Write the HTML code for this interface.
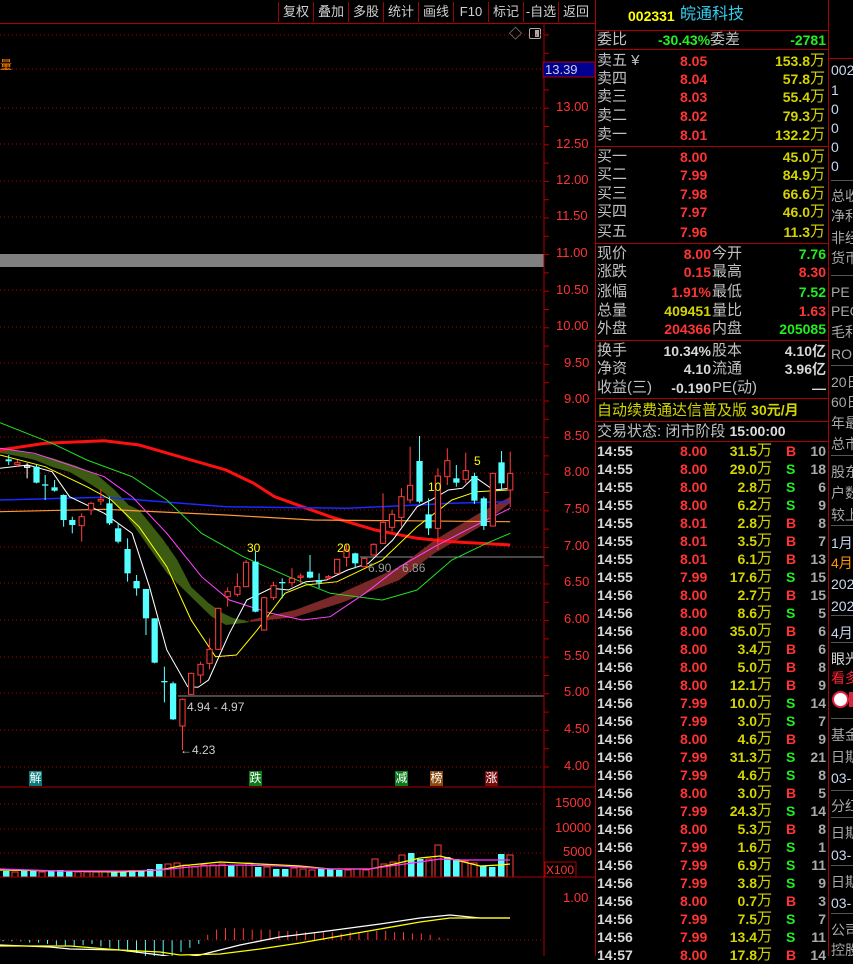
<!DOCTYPE html>
<html><head><meta charset="utf-8">
<style>
*{margin:0;padding:0;box-sizing:border-box}
body{width:853px;height:956px;background:#000;overflow:hidden;position:relative;font-family:"Liberation Sans","Noto Sans CJK SC",sans-serif;font-size:14px;color:#c0c0c0}
.a{position:absolute;white-space:nowrap;line-height:18px}
.r{text-align:right}
.red{color:#ff3434}.yel{color:#d4d400}.grn{color:#22ee22}.wht{color:#d8d8d8}
.hl{position:absolute;height:1px;background:#b00000}
.vl{position:absolute;width:1px;background:#b00000}
.b{font-weight:bold}
.tb{position:absolute;top:2px;height:20px;line-height:20px;color:#d0d0d0;font-size:13px;text-align:center;border-left:1px solid #a00000}
.ax{position:absolute;left:556px;color:#ff3434;font-size:13px;line-height:14px}
.rc{position:absolute;left:831px;color:#a8a8a8;font-size:14px;line-height:18px;white-space:nowrap}
.mk{position:absolute;top:771px;width:13px;height:15px;font-size:12px;line-height:15px;text-align:center;color:#fff}
</style></head><body>
<div class="hl" style="left:0;top:23px;width:595px"></div>
<div class="tb" style="left:278px;width:35px">复权</div>
<div class="tb" style="left:313px;width:35px">叠加</div>
<div class="tb" style="left:348px;width:35px">多股</div>
<div class="tb" style="left:383px;width:35px">统计</div>
<div class="tb" style="left:418px;width:35px">画线</div>
<div class="tb" style="left:453px;width:35px">F10</div>
<div class="tb" style="left:488px;width:35px">标记</div>
<div class="tb" style="left:523px;width:35px">-自选</div>
<div class="tb" style="left:558px;width:35px">返回</div>
<div class="a" style="left:509px;top:25px;color:#bbb;font-size:13px">◇</div>
<div style="position:absolute;left:529px;top:28px;width:12px;height:11px;border:1px solid #aaa;border-radius:2px"><div style="position:absolute;right:1px;top:1px;width:4px;height:7px;background:#aaa"></div></div>
<div class="a" style="left:0;top:56px;color:#ff8800;font-size:12px">量</div>

<svg width="853" height="956" style="position:absolute;left:0;top:0">
<g id="grid"></g>
<rect x="0" y="254" width="544" height="13" fill="#808080"/>
<line x1="360" y1="557" x2="544" y2="557" stroke="#909090"/>
<line x1="178" y1="696" x2="544" y2="696" stroke="#909090"/>
<g transform="scale(0.3476,1)">
<polygon fill="#3b5a12" points="0,448 50,451 100,454 150,458 220,466 280,475 330,490 370,505 400,510 440,527 470,540 510,560 550,587 600,603 640,613 670,618 700,620 720,622 700,623 650,625 610,617 580,607 530,590 480,573 440,553 400,533 350,510 300,493 250,482 200,472 150,467 100,460 50,456 0,453"/>
</g>
<g transform="scale(1.0427,1)">
<polygon fill="#7a2828" points="240,620 283,610 327,593 383,567 417,540 460,513 489,497 489,503 460,527 417,553 383,580 327,603 283,617 240,622"/>
<g id="lines"></g>
<g id="candles"></g>
</g>
<g id="vol"></g>
<g id="macd"></g>
<line x1="544" y1="24" x2="544" y2="956" stroke="#b00000"/>
<line x1="0" y1="787" x2="595" y2="787" stroke="#b00000"/>
<line x1="0" y1="877" x2="595" y2="877" stroke="#b00000"/>
<rect x="543" y="62" width="52" height="15" fill="#000090" stroke="#b00000"/>
<rect x="545" y="862" width="31" height="15" fill="none" stroke="#b00000"/>
</svg>
<div class="a" style="left:545px;top:61px;color:#ccd;font-size:13px">13.39</div>
<div class="ax" style="top:100px">13.00</div><div class="ax" style="top:137px">12.50</div>
<div class="ax" style="top:173px">12.00</div><div class="ax" style="top:209px">11.50</div>
<div class="ax" style="top:246px">11.00</div><div class="ax" style="top:283px">10.50</div>
<div class="ax" style="top:319px">10.00</div><div class="ax" style="top:356px;left:564px">9.50</div>
<div class="ax" style="top:392px;left:564px">9.00</div><div class="ax" style="top:429px;left:564px">8.50</div>
<div class="ax" style="top:465px;left:564px">8.00</div><div class="ax" style="top:502px;left:564px">7.50</div>
<div class="ax" style="top:539px;left:564px">7.00</div><div class="ax" style="top:575px;left:564px">6.50</div>
<div class="ax" style="top:612px;left:564px">6.00</div><div class="ax" style="top:649px;left:564px">5.50</div>
<div class="ax" style="top:685px;left:564px">5.00</div><div class="ax" style="top:722px;left:564px">4.50</div>
<div class="ax" style="top:759px;left:564px">4.00</div>
<div class="ax" style="top:796px;left:555px">15000</div>
<div class="ax" style="top:821px;left:555px">10000</div>
<div class="ax" style="top:845px;left:563px">5000</div>
<div class="ax" style="top:863px;left:546px;font-size:12px">X100</div>
<div class="ax" style="top:891px;left:563px">1.00</div>

<div class="a" style="left:187px;top:698px;color:#ccc;font-size:12px">4.94 - 4.97</div>
<div class="a" style="left:180px;top:741px;color:#ccc;font-size:12px">←4.23</div>
<div class="a" style="left:368px;top:559px;color:#999;font-size:12px">6.90 - 6.86</div>
<div class="a" style="left:247px;top:539px;color:#ffff00;font-size:12px">30</div>
<div class="a" style="left:337px;top:539px;color:#ffff00;font-size:12px">20</div>
<div class="a" style="left:428px;top:478px;color:#ffff00;font-size:12px">10</div>
<div class="a" style="left:474px;top:452px;color:#ffff00;font-size:12px">5</div>
<div class="mk" style="left:29px;background:#0a7a7a">解</div>
<div class="mk" style="left:249px;background:#0a7a1a">跌</div>
<div class="mk" style="left:395px;background:#0a7a1a">减</div>
<div class="mk" style="left:430px;background:#8a4a0a">榜</div>
<div class="mk" style="left:485px;background:#7a0a0a">涨</div>

<div class="vl" style="left:595px;top:0;height:956px"></div>
<div class="vl" style="left:828px;top:0;height:956px"></div>
<div class="hl" style="left:595px;top:30px;width:234px"></div>
<div class="a b" style="left:628px;top:7px;color:#ffff00;font-size:14px">002331</div>
<div class="a" style="left:680px;top:6px;color:#33ccee;font-size:16px">皖通科技</div>
<div class="a" style="left:597px;top:31px;font-size:15px">委比</div>
<div class="a b grn" style="left:658px;top:31px">-30.43%</div>
<div class="a" style="left:710px;top:31px;font-size:15px">委差</div>
<div class="a b grn r" style="left:760px;top:31px;width:66px">-2781</div>
<div class="hl" style="left:595px;top:49px;width:234px"></div>
<div class="hl" style="left:595px;top:146px;width:234px"></div>
<div class="hl" style="left:595px;top:243px;width:234px"></div>
<div class="hl" style="left:595px;top:340px;width:234px"></div>
<div class="hl" style="left:595px;top:398px;width:234px"></div>
<div class="hl" style="left:595px;top:421px;width:234px"></div>
<div class="hl" style="left:595px;top:441px;width:234px"></div>
<div id="q"></div>
<div class="a yel" style="left:597px;top:401px;font-size:15px">自动续费通达信普及版 <b style="font-size:14px">30元/月</b></div>
<div class="a" style="left:597px;top:422px;font-size:15px">交易状态: 闭市阶段 <b style="font-size:14px;color:#ddd">15:00:00</b></div>
<div id="t"></div>
<div class="hl" style="left:829px;top:58px;width:24px"></div>
<div id="rc"></div>

<script>
var NS="http://www.w3.org/2000/svg";
function el(g,tag,at){var e=document.createElementNS(NS,tag);for(var k in at)e.setAttribute(k,at[k]);document.getElementById(g).appendChild(e);return e;}
[35,69,108,144,181,217,290,327,363,400,437,473,510,547,583,620,657,693,730,767].forEach(function(y){el("grid","line",{x1:0,y1:y,x2:542,y2:y,stroke:"#b00000","stroke-dasharray":"1,3"});});
[804,829,853].forEach(function(y){el("grid","line",{x1:0,y1:y,x2:542,y2:y,stroke:"#b00000","stroke-dasharray":"1,3"});});
for(var y=35;y<780;y+=18.3){el("grid","line",{x1:544,y1:y,x2:549,y2:y,stroke:"#b00000"});}
function pl(pts,c,w){var s=pts.map(function(p){return (p[0]/3).toFixed(1)+","+(400+p[1]/3).toFixed(1)}).join(" ");el("lines","polyline",{points:s,fill:"none",stroke:c,"stroke-width":w});}
pl([[0,150],[130,130],[300,122],[400,135],[550,180],[650,210],[730,250],[790,290],[870,320],[950,350],[1080,390],[1200,415],[1300,425],[1468,435]],"#ff1010",3);
pl([[0,300],[300,292],[650,320],[1000,325],[1300,310],[1468,305]],"#1a2aff",1.5);
pl([[0,335],[300,328],[650,345],[900,360],[1468,365]],"#ff9933",1.2);
pl([[0,68],[150,130],[250,180],[380,230],[480,300],[580,400],[700,470],[830,530],[950,580],[1100,600],[1200,570],[1300,480],[1400,430],[1468,400]],"#22dd22",1);
pl([[0,145],[100,160],[300,230],[380,290],[480,400],[580,530],[660,600],[780,640],[870,660],[950,650],[1050,580],[1150,500],[1250,440],[1380,370],[1468,325]],"#ff44ff",1);
pl([[0,165],[130,200],[250,260],[320,300],[400,380],[480,500],[550,660],[620,770],[680,765],[740,690],[820,580],[880,555],[970,545],[1100,480],[1200,380],[1300,300],[1370,275],[1468,270]],"#ffff00",1);
pl([[0,205],[80,195],[150,215],[200,290],[300,340],[380,400],[430,560],[480,750],[540,860],[570,862],[600,840],[660,700],[710,600],[780,565],[830,570],[880,545],[940,540],[1000,510],[1060,490],[1130,420],[1200,320],[1240,300],[1290,270],[1330,265],[1365,230],[1420,270],[1468,265]],"#ffffff",1);
var C=[[25,178,184,165,195,0],[50,188,194,180,200,1],[78,198,202,190,235,2],[105,200,248,195,250,0],[130,253,257,225,300,0],[157,262,272,240,275,0],[183,285,360,283,380,0],[208,360,375,350,400,0],[235,350,377,340,425,1],[262,310,330,305,345,1],[290,298,303,268,315,1],[315,310,370,290,375,0],[340,385,425,370,430,0],[367,447,520,415,545,0],[393,543,565,525,587,0],[420,567,655,567,705,0],[445,655,788,655,790,0],[473,843,847,800,907,0],[498,850,958,845,960,0],[525,898,978,895,1050,1],[550,820,883,818,885,1],[577,793,825,785,850,1],[603,748,790,715,808,1],[628,625,748,623,750,1],[655,575,590,562,620,1],[683,560,583,520,590,1],[708,487,560,480,562,1],[735,485,635,455,637,0],[760,593,690,590,692,1],[787,557,593,545,600,1],[812,546,550,535,595,0],[840,535,548,505,560,1],[865,528,532,520,548,1],[892,515,533,465,535,0],[918,540,548,520,565,0],[945,530,534,525,540,1],[970,478,520,476,522,1],[997,450,472,435,500,1],[1022,460,490,458,505,0],[1048,475,500,473,502,1],[1075,433,465,430,467,1],[1102,367,430,280,432,1],[1128,343,382,330,395,1],[1155,290,352,265,380,1],[1180,256,300,140,310,1],[1207,183,305,108,310,0],[1233,343,385,295,405,0],[1260,228,385,205,450,1],[1287,182,230,145,255,1],[1313,235,248,195,260,0],[1340,212,238,158,250,1],[1365,228,302,218,312,0],[1392,295,378,290,390,0],[1418,220,378,218,380,1],[1443,187,250,153,270,0],[1468,220,270,155,322,1]];
C.forEach(function(c){var x=c[0]/3,bt=400+c[1]/3,bb=400+c[2]/3,wt=400+c[3]/3,wb=400+c[4]/3;
 var col=c[5]==0?"#54ffff":(c[5]==2?"#ffffff":"#ff3a3a");
 el("candles","line",{x1:x,y1:wt,x2:x,y2:wb,stroke:col,"stroke-width":1});
 var h=Math.max(bb-bt,1);
 if(c[5]==0) el("candles","rect",{x:x-3,y:bt,width:6,height:h,fill:col});
 else el("candles","rect",{x:x-2.5,y:bt,width:5,height:h,fill:"#000",stroke:col,"stroke-width":1});
});
var V=[6,5,6,6,5,6,7,6,5,5,5,6,5,6,7,7,8,13,13,14,12,10,12,12,13,12,12,14,10,10,8,8,9,8,7,9,8,7,7,8,7,18,13,15,22,24,18,18,32,20,18,16,14,11,10,23,22];
V.forEach(function(h,i){var x=3+i*9.0;var up=[1,4,8,9,10,11,18,19,20,21,22,23,24,26,27,29,32,33,34,38,39,40,41,42,43,44,47,48,51,52,56].indexOf(i)>=0;
 if(up) el("vol","rect",{x:x,y:877-h,width:6,height:h,fill:"#000",stroke:"#ff3a3a"});
 else el("vol","rect",{x:x,y:877-h,width:6.5,height:h,fill:"#54ffff"});});
function pv(pts,c){el("vol","polyline",{points:pts,fill:"none",stroke:c,"stroke-width":1.2});}
pv("0,870 60,871 120,872 160,870 180,866 220,862 260,864 300,866 330,869 370,869 390,865 420,858 440,856 460,861 480,866 500,865 510,864","#ffff00");
pv("0,869 60,871 120,871 160,870 200,866 240,865 280,866 330,869 370,869 390,866 420,862 440,859 460,860 480,860 500,860 510,860","#ff33ff");
for(var i=0;i<58;i++){var x=3+i*8.9;var v=[1,1,1,2,2,3,4,5,5,4,3,5,6,8,9,10,14,16,17,13,9,6,3,-4,-8,-9,-9,-9,-8,-8,-8,-7,-7,-7,-6,-6,-6,-6,-5,-6,-6,-6,-7,-7,-6,-6,-5,-5,-4,-2,-1,0,0,0,0,0,0,0][i];
 if(v>0) el("macd","line",{x1:x,y1:940,x2:x,y2:940+v*1.3,stroke:"#54ffff"});
 else if(v<0) el("macd","line",{x1:x,y1:940,x2:x,y2:940+v*1.3,stroke:"#ff3a3a"});}
el("macd","line",{x1:0,y1:940,x2:542,y2:940,stroke:"#b00000","stroke-dasharray":"1,3"});
el("macd","polyline",{points:"0,945 50,947 70,949 120,950 160,955 180,958 200,955 240,945 280,937 320,932 350,928 380,924 420,918 450,915 480,918 510,918",fill:"none",stroke:"#ffffff","stroke-width":1.3});
el("macd","polyline",{points:"0,946 50,946 70,946 120,950 160,952 180,955 220,954 260,949 300,943 340,936 380,929 420,922 450,918 480,918 510,918",fill:"none",stroke:"#ffff00","stroke-width":1.3});

var q=document.getElementById("q"),h="";
function row(y,l,v,vc,r,rv,rc){h+='<div class="a" style="left:597px;top:'+y+'px;font-size:15px">'+l+'</div>';
 if(v)h+='<div class="a b r '+vc+'" style="left:640px;top:'+y+'px;width:71px">'+v+'</div>';
 if(r)h+='<div class="a" style="left:712px;top:'+y+'px;font-size:15px">'+r+'</div>';
 if(rv)h+='<div class="a b r '+rc+'" style="left:755px;top:'+y+'px;width:71px">'+rv+'</div>';}
function ob(y,l,p,v){h+='<div class="a" style="left:597px;top:'+y+'px;font-size:15px">'+l+'</div><div class="a b red" style="left:680px;top:'+y+'px">'+p+'</div><div class="a b yel r" style="left:740px;top:'+y+'px;width:70px">'+v+'</div><div class="a yel" style="left:810px;top:'+y+'px;font-size:15px">万</div>';}
ob(52,"卖五 ¥","8.05","153.8");ob(70,"卖四","8.04","57.8");ob(88,"卖三","8.03","55.4");ob(107,"卖二","8.02","79.3");ob(126,"卖一","8.01","132.2");
ob(148,"买一","8.00","45.0");ob(166,"买二","7.99","84.9");ob(185,"买三","7.98","66.6");ob(203,"买四","7.97","46.0");ob(223,"买五","7.96","11.3");
row(245,"现价","8.00","red","今开","7.76","grn");row(263,"涨跌","0.15","red","最高","8.30","red");row(283,"涨幅","1.91%","red","最低","7.52","grn");
row(302,"总量","409451","yel","量比","1.63","red");row(320,"外盘","204366","red","内盘","205085","grn");
row(342,"换手","10.34%","wht","股本","4.10亿","wht");row(360,"净资","4.10","wht","流通","3.96亿","wht");row(379,"收益(三)","-0.190","wht","PE(动)","—","wht");
q.innerHTML=h;
var T=[["14:55","8.00","31.5","B",10],["14:55","8.00","29.0","S",18],["14:55","8.00","2.8","S",6],["14:55","8.00","6.2","S",9],["14:55","8.01","2.8","B",8],["14:55","8.01","3.5","B",7],["14:55","8.01","6.1","B",13],["14:55","7.99","17.6","S",15],["14:56","8.00","2.7","B",15],["14:56","8.00","8.6","S",5],["14:56","8.00","35.0","B",6],["14:56","8.00","3.4","B",6],["14:56","8.00","5.0","B",8],["14:56","8.00","12.1","B",9],["14:56","7.99","10.0","S",14],["14:56","7.99","3.0","S",7],["14:56","8.00","4.6","B",9],["14:56","7.99","31.3","S",21],["14:56","7.99","4.6","S",8],["14:56","8.00","3.0","B",5],["14:56","7.99","24.3","S",14],["14:56","8.00","5.3","B",8],["14:56","7.99","1.6","S",1],["14:56","7.99","6.9","S",11],["14:56","7.99","3.8","S",9],["14:56","8.00","0.7","B",3],["14:56","7.99","7.5","S",7],["14:56","7.99","13.4","S",11],["14:57","8.00","17.8","B",14]];
h="";T.forEach(function(t,i){var y=442+i*18;
 h+='<div class="a b wht" style="left:597px;top:'+y+'px">'+t[0]+'</div><div class="a b red" style="left:680px;top:'+y+'px">'+t[1]+'</div><div class="a b yel r" style="left:720px;top:'+y+'px;width:37px">'+t[2]+'</div><div class="a yel" style="left:757px;top:'+y+'px;font-size:15px">万</div><div class="a b '+(t[3]=="B"?"red":"grn")+'" style="left:786px;top:'+y+'px">'+t[3]+'</div><div class="a b r wht" style="left:800px;top:'+y+'px;width:26px;color:#aaa">'+t[4]+'</div>';});
document.getElementById("t").innerHTML=h;
var R=[[61,"002","#c8d8f0"],[81,"1","#c8d8f0"],[100,"0","#c8d8f0"],[119,"0","#c8d8f0"],[138,"0","#c8d8f0"],[157,"0","#c8d8f0"],[187,"总收"],[207,"净利"],[229,"非经"],[249,"货币"],[283,"PE"],[302,"PEG"],[323,"毛利"],[345,"RO"],[373,"20日"],[393,"60日"],[414,"年最"],[435,"总市"],[463,"股东"],[484,"户数"],[506,"较上"],[534,"1月","#c8d8f0"],[554,"4月","#ff9900"],[575,"202","#c8d8f0"],[597,"202","#c8d8f0"],[624,"4月","#c8d8f0"],[650,"眼光","#ddd"],[669,"看多","#ff2233"],[726,"基金"],[748,"日期"],[769,"03-","#c8d8f0"],[797,"分红"],[824,"日期"],[846,"03-","#c8d8f0"],[873,"日期"],[894,"03-","#c8d8f0"],[921,"公司"],[941,"控股"]];
h="";R.forEach(function(r){h+='<div class="rc" style="top:'+r[0]+'px;color:'+(r[2]||"#a8a8a8")+'">'+r[1]+'</div>';});
[180,275,365,455,525,615,642,718,790,817,865,913].forEach(function(y){h+='<div style="position:absolute;left:831px;top:'+y+'px;width:22px;height:1px;background:#555"></div>';});
h+='<div style="position:absolute;left:832px;top:691px;width:17px;height:17px;border-radius:50%;background:#fff;border:2px solid #e02040"></div><div style="position:absolute;left:849px;top:692px;width:4px;height:15px;background:#e02040"></div>';
document.getElementById("rc").innerHTML=h;
</script>
</body></html>
